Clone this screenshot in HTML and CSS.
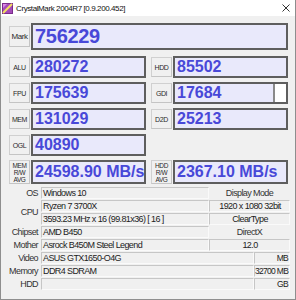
FILE: index.html
```html
<html>
<head>
<meta charset="UTF-8">
<title>CrystalMark 2004R7</title>
<link rel="stylesheet" href="styles.css">
</head>
<body>
<div class="window">
	<div class="titlebar">
		<svg class="appicon" width="11" height="11" viewBox="0 0 11 11">
			<rect x="0" y="0" width="11" height="11" fill="#7a2c8c"/>
			<rect x="1" y="1" width="9" height="9" fill="#a44bb8"/>
			<path d="M1 10 L10 1" stroke="#f4e060" stroke-width="2"/>
			<path d="M1 1 L5 1 L1 5 Z" fill="#d889e6"/>
		</svg>
		<span class="title">CrystalMark 2004R7 [0.9.200.452]</span>
		<svg class="close" width="8" height="8" viewBox="0 0 8 8">
			<path d="M0.5 0.5 L7.5 7.5 M7.5 0.5 L0.5 7.5" stroke="#333" stroke-width="1"/>
		</svg>
	</div>

	<div class="scores">
		<div class="markrow">
			<div class="lbl lbl-mark">Mark</div>
			<div class="val val-mark">756229</div>
		</div>

		<div class="grid">
			<div class="cell"><div class="lbl">ALU</div><div class="val">280272</div></div>
			<div class="cell"><div class="lbl">HDD</div><div class="val">85502</div></div>

			<div class="cell"><div class="lbl">FPU</div><div class="val">175639</div></div>
			<div class="cell"><div class="lbl">GDI</div><div class="val val-gdi"><span class="num">17684</span><span class="rest"></span></div></div>

			<div class="cell"><div class="lbl">MEM</div><div class="val">131029</div></div>
			<div class="cell"><div class="lbl">D2D</div><div class="val">25213</div></div>

			<div class="cell"><div class="lbl">OGL</div><div class="val">40890</div></div>
			<div class="cell"></div>

			<div class="cell cell-rw"><div class="lbl lbl-rw">MEM<br>R/W<br>AVG</div><div class="val">24598.90 MB/s</div></div>
			<div class="cell cell-rw"><div class="lbl lbl-rw">HDD<br>R/W<br>AVG</div><div class="val">2367.10 MB/s</div></div>
		</div>
	</div>

	<div class="info">
		<div class="ik">OS</div>
		<div class="f">Windows 10</div>
		<div class="rk wide">Display Mode</div>

		<div class="ik cpu">CPU</div>
		<div class="f">Ryzen 7 3700X</div>
		<div class="f wide center">1920 x 1080 32bit</div>

		<div class="f">3593.23 MHz x 16 (99.81x36) [ 16 ]</div>
		<div class="f wide center">ClearType</div>

		<div class="ik">Chipset</div>
		<div class="f">AMD B450</div>
		<div class="rk wide">DirectX</div>

		<div class="ik">Mother</div>
		<div class="f">Asrock B450M Steel Legend</div>
		<div class="f wide center">12.0</div>

		<div class="ik">Video</div>
		<div class="f long">ASUS GTX1650-O4G</div>
		<div class="f right">MB</div>

		<div class="ik">Memory</div>
		<div class="f long">DDR4 SDRAM</div>
		<div class="f right">32700 MB</div>

		<div class="ik">HDD</div>
		<div class="f long"></div>
		<div class="f right">GB</div>
	</div>
</div>
</body>
</html>
```

FILE: styles.css
```css
body {
	margin: 0;
	padding: 0;
	background-color: #FFFFFF;
	font-family: "Liberation Sans", Arial, sans-serif;
	color: #1e1e1e;
}

.window {
	width: 296px;
	height: 300px;
	box-sizing: border-box;
	background-color: #F0F0F0;
	border: 1px solid #8E8E8E;
	border-top: none;
}

/* title bar */
.titlebar {
	height: 16px;
	background-color: #FFFFFF;
	display: flex;
	align-items: center;
	padding-left: 1px;
}

.appicon {
	flex: none;
}

.title {
	margin-left: 3px;
	font-size: 8px;
	letter-spacing: -0.4px;
	color: #111;
	flex: 1;
}

.close {
	margin-right: 5px;
	flex: none;
}

/* score boxes */
.scores {
	padding: 7px 7px 0 8px;
}

.markrow {
	display: flex;
	align-items: center;
	height: 27px;
}

.lbl {
	flex: none;
	width: 21px;
	height: 21px;
	box-sizing: border-box;
	margin-right: 1px;
	border: 1px solid;
	border-color: #D0D0D0 #C4C4C4 #C4C4C4 #D0D0D0;
	display: flex;
	align-items: center;
	justify-content: center;
	font-size: 7px;
	letter-spacing: -0.4px;
	color: #2a2a2a;
}

.lbl-mark {
	font-size: 8px;
}

.lbl-rw {
	height: 24px;
	font-size: 6.5px;
	line-height: 7px;
	text-align: center;
	letter-spacing: -0.4px;
}

.val {
	flex: 1;
	height: 100%;
	box-sizing: border-box;
	border: 2px solid #5E5E5E;
	background-color: #E9E9FB;
	color: #4848D8;
	font-size: 16px;
	font-weight: bold;
	display: flex;
	align-items: center;
	padding-left: 2px;
	white-space: nowrap;
	overflow: hidden;
}

.val-mark {
	font-size: 20px;
	letter-spacing: -0.3px;
}

.val-gdi {
	padding-right: 0;
}

.val-gdi .num {
	flex: 1;
}

.val-gdi .rest {
	width: 11px;
	height: 100%;
	background-color: #FFFFFF;
	border-left: 2px solid #8A8A8A;
}

.grid {
	display: grid;
	grid-template-columns: 137px 137px;
	grid-auto-rows: 22px;
	column-gap: 5px;
	row-gap: 4px;
	margin-top: 6px;
}

.grid .cell-rw {
	height: 24px;
}

.cell {
	display: flex;
	align-items: center;
	height: 22px;
}

.cell .lbl {
	height: 20px;
}

.cell .lbl-rw {
	height: 24px;
}

/* system info */
.info {
	display: grid;
	grid-template-columns: 40px 168px 45px 36px;
	grid-template-rows: repeat(8, 12px);
	row-gap: 1px;
	margin-top: 5px;
	font-size: 9px;
	letter-spacing: -0.6px;
}

.ik {
	grid-column: 1;
	text-align: right;
	padding-right: 3px;
	line-height: 12px;
	color: #333;
}

.ik.cpu {
	grid-row: span 2;
	line-height: 25px;
}

.rk {
	text-align: center;
	line-height: 12px;
	color: #333;
}

.f {
	box-sizing: border-box;
	border: 1px solid;
	border-color: #C6C6C6 #FAFAFA #FAFAFA #C6C6C6;
	line-height: 10px;
	padding-left: 1px;
	white-space: nowrap;
	overflow: hidden;
	color: #222;
}

.wide {
	grid-column: 3 / span 2;
}

.long {
	grid-column: 2 / span 2;
}

.center {
	text-align: center;
}

.right {
	text-align: right;
	padding-left: 0;
	padding-right: 1px;
	font-size: 8.5px;
	letter-spacing: -0.7px;
}
```
